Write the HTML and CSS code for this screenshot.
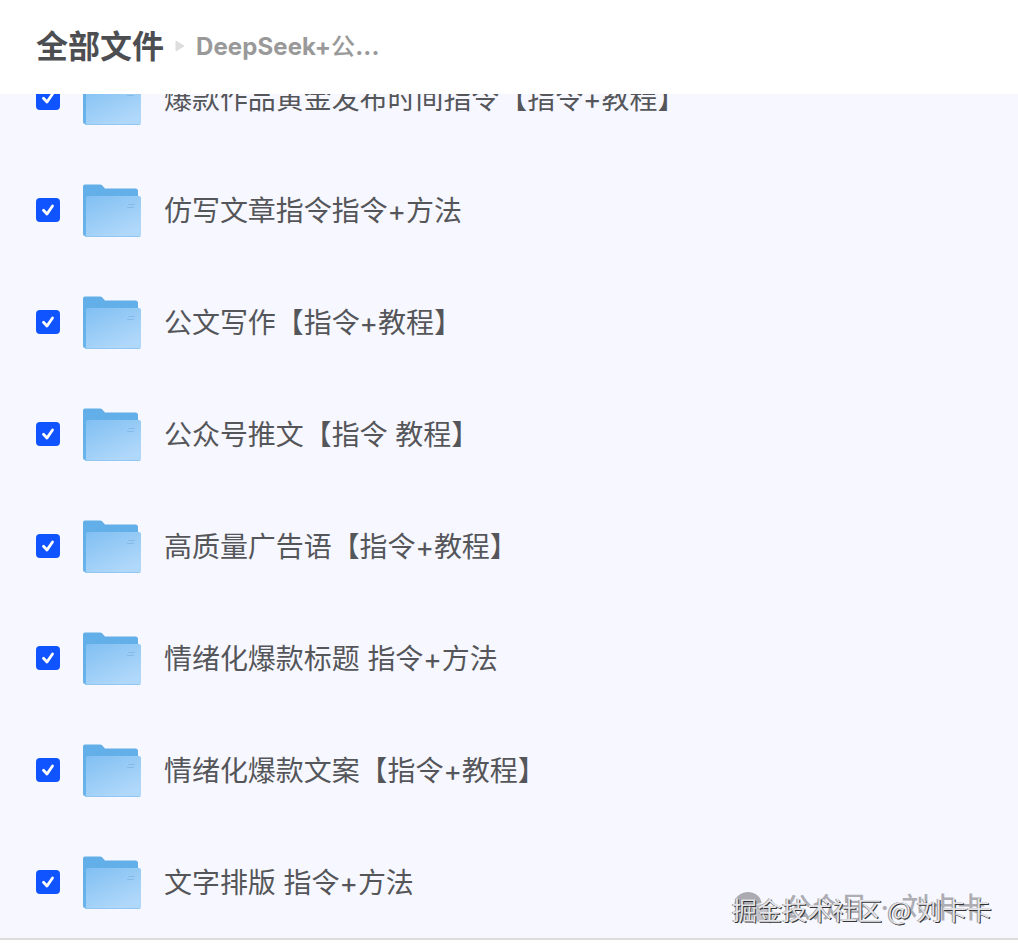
FILE: index.html
```html
<!DOCTYPE html>
<html lang="zh-CN">
<head>
    <meta charset="UTF-8">
    <title>全部文件</title>
    <link rel="stylesheet" href="styles.css">
</head>
<body>
<svg class="defs" width="0" height="0">
    <defs>
        <linearGradient id="back" x1="0" y1="0" x2="0" y2="1">
            <stop offset="0" stop-color="#62aee8"/>
            <stop offset="1" stop-color="#69b3ea"/>
        </linearGradient>
        <linearGradient id="front" x1="0" y1="0" x2="0.6" y2="1">
            <stop offset="0" stop-color="#80bff2"/>
            <stop offset="1" stop-color="#b0d8fa"/>
        </linearGradient>
        <symbol id="folder" viewBox="0 0 60 56">
            <path d="M1 3.500Q1 1.500 3 1.500H18Q19.500 1.500 20.500 2.700L23 5.500H53.500Q56 5.500 56 8V53H3Q1 53 1 51Z" fill="url(#back)"/>
            <path d="M6 13H57Q59 13 59 15V52Q59 54 57 54H3Q4 53 4 51V15Q4 13 6 13Z" fill="url(#front)"/>
            <path d="M3 53.500H58" stroke="#93c7ef" stroke-width="1"/>
            <path d="M46 21.500H53M45 24.500H52" stroke="#75b0e2" stroke-width="1" opacity=".6"/>
        </symbol>
        <symbol id="check" viewBox="0 0 24 24">
            <path d="M7.500 12.200L11 16L16.500 8" fill="none" stroke="#fff" stroke-width="2.800" stroke-linecap="round" stroke-linejoin="round"/>
        </symbol>
    </defs>
</svg>
<div class="header">
    <span class="all">全部文件</span>
    <svg class="arrow" width="10" height="14" viewBox="0 0 10 14"><path d="M1 1L9 6L1 11Z" fill="#dedede" stroke="#dedede" stroke-linejoin="round"/></svg>
    <span class="current">DeepSeek+<span class="cn">公</span>...</span>
</div>
<div class="list">
    <div class="row"><svg class="checkbox"><use href="#check"/></svg><svg class="folder"><use href="#folder"/></svg><span class="name">爆款作品黄金发布时间指令【指令+教程】</span></div>
    <div class="row"><svg class="checkbox"><use href="#check"/></svg><svg class="folder"><use href="#folder"/></svg><span class="name">仿写文章指令指令+方法</span></div>
    <div class="row"><svg class="checkbox"><use href="#check"/></svg><svg class="folder"><use href="#folder"/></svg><span class="name">公文写作【指令+教程】</span></div>
    <div class="row"><svg class="checkbox"><use href="#check"/></svg><svg class="folder"><use href="#folder"/></svg><span class="name">公众号推文【指令 教程】</span></div>
    <div class="row"><svg class="checkbox"><use href="#check"/></svg><svg class="folder"><use href="#folder"/></svg><span class="name">高质量广告语【指令+教程】</span></div>
    <div class="row"><svg class="checkbox"><use href="#check"/></svg><svg class="folder"><use href="#folder"/></svg><span class="name">情绪化爆款标题 指令+方法</span></div>
    <div class="row"><svg class="checkbox"><use href="#check"/></svg><svg class="folder"><use href="#folder"/></svg><span class="name">情绪化爆款文案【指令+教程】</span></div>
    <div class="row"><svg class="checkbox"><use href="#check"/></svg><svg class="folder"><use href="#folder"/></svg><span class="name">文字排版 指令+方法</span></div>
</div>
<div class="wechat">
    <svg width="42" height="36" viewBox="0 0 42 36">
        <ellipse cx="14" cy="13" rx="13.500" ry="12" fill="#aaaab0"/>
        <path d="M6 22L4 29L12 25Z" fill="#aaaab0"/>
        <ellipse cx="28" cy="22" rx="11.500" ry="9.500" fill="#c3c3c9" stroke="#f7f8ff"/>
        <path d="M32 30L37 33L35 28Z" fill="#c3c3c9"/>
    </svg>
    <span>公众号 · 刘卡卡</span>
</div>
<div class="juejin">掘金技术社区 @ 刘卡卡</div>
</body>
</html>
```
FILE: styles.css
```css
*{margin: 0;padding: 0;box-sizing: border-box;}
body{position: relative;width: 1018px;height: 950px;overflow: hidden;background: #fff;color: #55565a;font-family: Inter, "Noto Sans CJK SC", sans-serif;}
.defs{position: absolute;}
.header{display: flex;align-items: center;height: 94px;padding-left: 36px;}
.all{font-size: 32px;font-weight: bold;line-height: 40px;color: #4d4e52;}
.arrow{margin-left: 11px;}
.current{margin-left: 11px;font-size: 24px;font-weight: bold;line-height: 30px;letter-spacing: .1px;color: #999;}
.current .cn{font-weight: 500;}
/* 列表贴底，第一行被标题栏遮住一半 */
.list{display: flex;flex-direction: column;justify-content: flex-end;height: 846px;overflow: hidden;background: #f7f8ff;border-bottom: 2px solid #dcdcdc;}
.row{display: flex;flex: none;align-items: center;height: 112px;padding-left: 36px;}
.checkbox{width: 24px;height: 24px;border-radius: 4px;background: #0f54ff;}
.folder{width: 60px;height: 56px;margin: 2px 0 0 22px;}
.name{margin-left: 22px;padding-top: 2px;font-size: 28px;line-height: 40px;letter-spacing: -.06px;white-space: nowrap;}
/* 水印 */
.wechat{position: absolute;left: 734px;top: 891px;display: flex;align-items: flex-start;font-size: 28px;line-height: 34px;color: #adadb3;white-space: nowrap;}
.wechat span{margin-left: 8px;font-weight: 500;word-spacing: 5px;}
.juejin{position: absolute;left: 732px;top: 892px;font-family: "Noto Sans CJK SC", sans-serif;font-size: 25px;line-height: 34px;color: #e3e3e8;text-shadow: 1px 1px 0 #333, -1px 0 0 #999;white-space: nowrap;}
```
